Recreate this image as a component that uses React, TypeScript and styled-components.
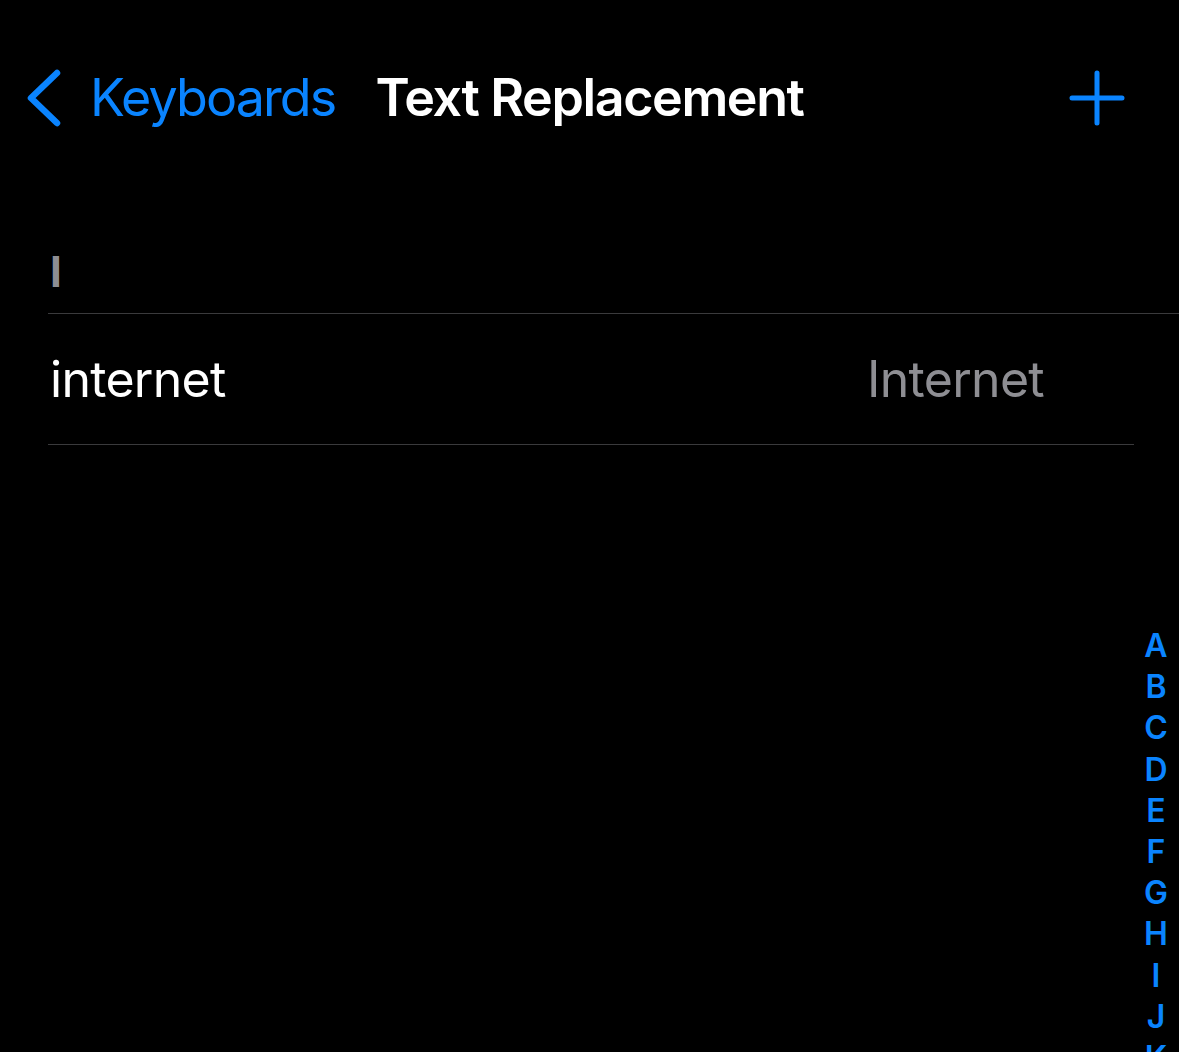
import React from "react";
import styled, { createGlobalStyle } from "styled-components";

const Global = createGlobalStyle`
  html, body { margin: 0; padding: 0; background: #000; }
  body { font-family: Inter, "Noto Sans", sans-serif; color: #fff; -webkit-font-smoothing: antialiased; }
`;

const Screen = styled.div`
  position: relative;
  width: 1179px;
  height: 1052px;
  background: #000;
  overflow: hidden;
`;

const NavBar = styled.div`
  display: grid;
  grid-template-columns: minmax(0, 1fr) auto minmax(0, 1fr);
  align-items: center;
  height: 98px;
  padding-top: 49px;
`;

const BackButton = styled.div`
  display: flex;
  align-items: center;
  gap: 28px;
  padding-left: 26px;
  color: #0a84ff;
  font-size: 52px;
  font-weight: 400;
  letter-spacing: -1.9px;
  line-height: 1;
  white-space: nowrap;
`;

const Title = styled.div`
  color: #fff;
  font-size: 52px;
  font-weight: 600;
  letter-spacing: -1.4px;
  line-height: 1;
  white-space: nowrap;
`;

const AddButton = styled.div`
  display: flex;
  justify-content: flex-end;
  padding-right: 54px;
`;

const List = styled.div`
  padding-top: 93px;
  padding-left: 48px;
`;

const SectionHeader = styled.div`
  box-sizing: border-box;
  height: 74px;
  padding-top: 11px;
  padding-left: 2px;
  color: #8e8e93;
  font-size: 42px;
  line-height: 42px;
  font-weight: 700;
  border-bottom: 1px solid #3a3a3c;
`;

const Row = styled.div`
  display: flex;
  align-items: center;
  justify-content: space-between;
  height: 130px;
  margin-right: 45px;
  padding-left: 2px;
  padding-right: 90px;
  border-bottom: 1px solid #3a3a3c;
  font-size: 50px;
  letter-spacing: -0.7px;
`;

const Phrase = styled.span`
  color: #fff;
`;

const Shortcut = styled.span`
  color: #8e8e93;
`;

const IndexBar = styled.div`
  position: absolute;
  right: 10px;
  top: 625px;
  display: flex;
  flex-direction: column;
  align-items: center;
  color: #0a84ff;
  font-size: 32px;
  font-weight: 600;
  line-height: 41.2px;
  width: 26px;
`;

const letters = "ABCDEFGHIJK".split("");

export default function App() {
  return (
    <Screen>
      <Global />
      <NavBar>
        <BackButton>
          <svg width="36" height="58" viewBox="0 0 36 58" fill="none">
            <path d="M31 4 L5 29 L31 54" stroke="#0a84ff" strokeWidth="6.5" strokeLinecap="round" strokeLinejoin="round" />
          </svg>
          <span>Keyboards</span>
        </BackButton>
        <Title>Text Replacement</Title>
        <AddButton>
          <svg width="56" height="56" viewBox="0 0 56 56" fill="none">
            <path d="M28 3 V53 M3 28 H53" stroke="#0a84ff" strokeWidth="5" strokeLinecap="round" />
          </svg>
        </AddButton>
      </NavBar>
      <List>
        <SectionHeader>I</SectionHeader>
        <Row>
          <Phrase>internet</Phrase>
          <Shortcut>Internet</Shortcut>
        </Row>
      </List>
      <IndexBar>
        {letters.map((l) => (
          <span key={l}>{l}</span>
        ))}
      </IndexBar>
    </Screen>
  );
}
